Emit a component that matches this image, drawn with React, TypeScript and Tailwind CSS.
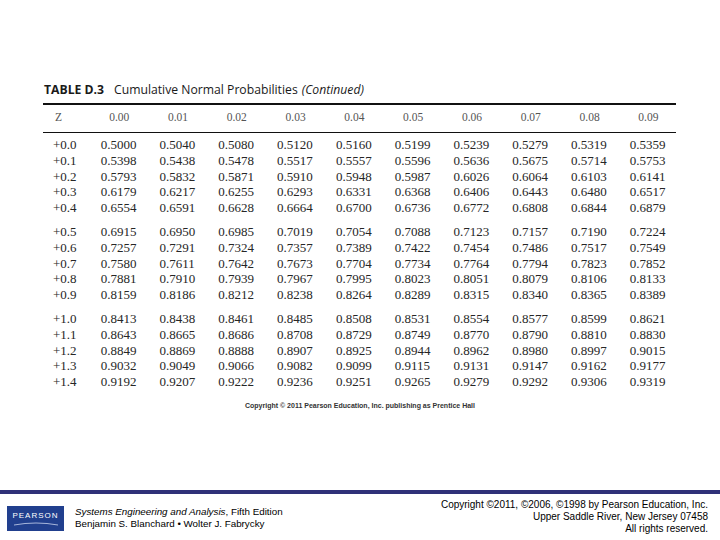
import React from "react";

const cols = ["0.00", "0.01", "0.02", "0.03", "0.04", "0.05", "0.06", "0.07", "0.08", "0.09"];

const groups: [string, string[]][][] = [
  [
    ["+0.0", ["0.5000", "0.5040", "0.5080", "0.5120", "0.5160", "0.5199", "0.5239", "0.5279", "0.5319", "0.5359"]],
    ["+0.1", ["0.5398", "0.5438", "0.5478", "0.5517", "0.5557", "0.5596", "0.5636", "0.5675", "0.5714", "0.5753"]],
    ["+0.2", ["0.5793", "0.5832", "0.5871", "0.5910", "0.5948", "0.5987", "0.6026", "0.6064", "0.6103", "0.6141"]],
    ["+0.3", ["0.6179", "0.6217", "0.6255", "0.6293", "0.6331", "0.6368", "0.6406", "0.6443", "0.6480", "0.6517"]],
    ["+0.4", ["0.6554", "0.6591", "0.6628", "0.6664", "0.6700", "0.6736", "0.6772", "0.6808", "0.6844", "0.6879"]],
  ],
  [
    ["+0.5", ["0.6915", "0.6950", "0.6985", "0.7019", "0.7054", "0.7088", "0.7123", "0.7157", "0.7190", "0.7224"]],
    ["+0.6", ["0.7257", "0.7291", "0.7324", "0.7357", "0.7389", "0.7422", "0.7454", "0.7486", "0.7517", "0.7549"]],
    ["+0.7", ["0.7580", "0.7611", "0.7642", "0.7673", "0.7704", "0.7734", "0.7764", "0.7794", "0.7823", "0.7852"]],
    ["+0.8", ["0.7881", "0.7910", "0.7939", "0.7967", "0.7995", "0.8023", "0.8051", "0.8079", "0.8106", "0.8133"]],
    ["+0.9", ["0.8159", "0.8186", "0.8212", "0.8238", "0.8264", "0.8289", "0.8315", "0.8340", "0.8365", "0.8389"]],
  ],
  [
    ["+1.0", ["0.8413", "0.8438", "0.8461", "0.8485", "0.8508", "0.8531", "0.8554", "0.8577", "0.8599", "0.8621"]],
    ["+1.1", ["0.8643", "0.8665", "0.8686", "0.8708", "0.8729", "0.8749", "0.8770", "0.8790", "0.8810", "0.8830"]],
    ["+1.2", ["0.8849", "0.8869", "0.8888", "0.8907", "0.8925", "0.8944", "0.8962", "0.8980", "0.8997", "0.9015"]],
    ["+1.3", ["0.9032", "0.9049", "0.9066", "0.9082", "0.9099", "0.9115", "0.9131", "0.9147", "0.9162", "0.9177"]],
    ["+1.4", ["0.9192", "0.9207", "0.9222", "0.9236", "0.9251", "0.9265", "0.9279", "0.9292", "0.9306", "0.9319"]],
  ],
];

const grid = "grid grid-cols-[47.7px_repeat(10,58.8px)] pl-[53px]";

function PearsonLogo() {
  return (
    <div className="w-[57px] h-[25px] bg-[#213f8e] flex flex-col items-center pt-[5px]">
      <span className="text-white text-[8px] leading-[9px] tracking-[1px] font-['Liberation_Sans',sans-serif]">
        PEARSON
      </span>
      <svg width="46" height="5" viewBox="0 0 46 5" className="mt-[1px]">
        <path d="M1 4 Q23 0 45 4" stroke="#c9d3ee" strokeWidth="0.8" fill="none" />
      </svg>
    </div>
  );
}

export default function App() {
  return (
    <div className="w-[720px] h-[540px] bg-white flex flex-col overflow-hidden">
      {/* table */}
      <div className="pt-[82px] pl-[44px] flex items-baseline text-[12.2px] leading-[15px] text-[#1a1a1a] font-['Open_Sans',sans-serif]">
        <span className="font-bold">TABLE D.3</span>
        <span className="ml-[10px]">Cumulative Normal Probabilities</span>
        <span className="ml-[4px] italic">(Continued)</span>
      </div>
      <div className="ml-[43px] mt-[6px] w-[633px] h-[1.5px] bg-[#111]" />
      <div className={grid + " h-[27px] items-center font-['Liberation_Serif',serif] text-[11.5px] text-[#555]"}>
        <span className="pl-[2px]">Z</span>
        {cols.map((c) => (
          <span key={c} className="w-[37px] text-center">
            {c}
          </span>
        ))}
      </div>
      <div className="ml-[43px] w-[633px] h-[1.5px] bg-[#111]" />
      <div className="mt-[4px] flex flex-col gap-[8px] font-['Liberation_Serif',serif] text-[13px] text-[#262626]">
        {groups.map((g, gi) => (
          <div key={gi} className="flex flex-col">
            {g.map(([z, vals]) => (
              <div key={z} className={grid + " h-[15.8px] leading-[15.8px]"}>
                <span>{z}</span>
                {vals.map((v, i) => (
                  <span key={i}>{v}</span>
                ))}
              </div>
            ))}
          </div>
        ))}
      </div>
      <div className="mt-[11px] text-center text-[7px] leading-[9px] font-bold text-[#333] font-['Liberation_Sans',sans-serif]">
        Copyright © 2011 Pearson Education, Inc. publishing as Prentice Hall
      </div>

      {/* footer */}
      <div className="mt-auto h-[50px] border-t-[4px] border-[#2f3178] flex justify-between pl-[7px] pr-[12px] pt-[5px] font-['Liberation_Sans',sans-serif] text-black">
        <div className="flex items-start mt-[7px] gap-[11px]">
          <PearsonLogo />
          <div className="text-[9.8px] leading-[11.5px]">
            <div>
              <span className="italic">Systems Engineering and Analysis</span>, Fifth Edition
            </div>
            <div>Benjamin S. Blanchard • Wolter J. Fabrycky</div>
          </div>
        </div>
        <div className="text-right text-[10px] leading-[12px]">
          <div>Copyright ©2011, ©2006, ©1998 by Pearson Education, Inc.</div>
          <div>Upper Saddle River, New Jersey 07458</div>
          <div>All rights reserved.</div>
        </div>
      </div>
    </div>
  );
}
